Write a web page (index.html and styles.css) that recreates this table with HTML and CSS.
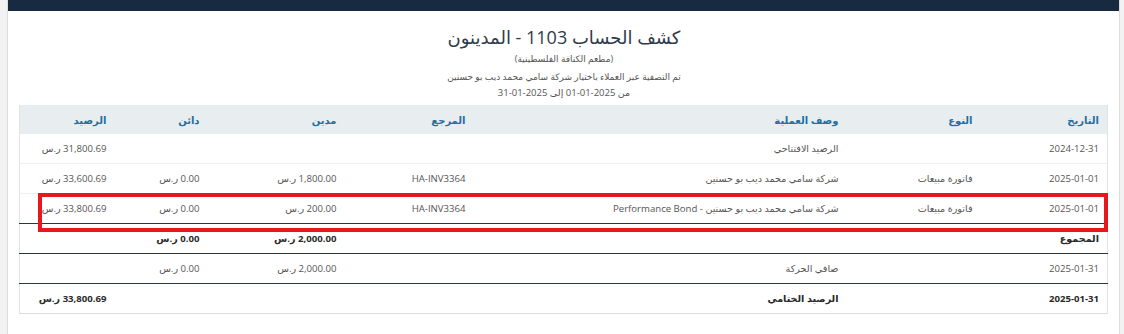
FILE: index.html
```html
<!DOCTYPE html>
<html lang="ar" dir="rtl">
<head>
<meta charset="utf-8">
<title>كشف الحساب</title>
<link rel="stylesheet" href="styles.css">
</head>
<body>
<div class="card">
  <div class="topbar"></div>
  <div class="content">
    <header class="report-head">
      <h1 class="title">كشف الحساب 1103 - المدينون</h1>
      <p class="sub company">(مطعم الكنافة الفلسطينية)</p>
      <p class="sub filter">تم التصفية عبر العملاء باختيار شركة سامي محمد ديب بو حسنين</p>
      <p class="sub period">من 2025-01-01 إلى 2025-01-31</p>
    </header>
    <div class="table-wrap">
      <table class="ledger">
        <colgroup>
          <col class="c-date"><col class="c-type"><col class="c-desc"><col class="c-ref"><col class="c-debit"><col class="c-credit"><col class="c-bal">
        </colgroup>
        <thead>
          <tr><th>التاريخ</th><th>النوع</th><th>وصف العملية</th><th>المرجع</th><th>مدين</th><th>دائن</th><th>الرصيد</th></tr>
        </thead>
        <tbody>
          <tr class="light"><td>2024-12-31</td><td></td><td>الرصيد الافتتاحي</td><td></td><td></td><td></td><td>31,800.69 ر.س</td></tr>
          <tr class="light"><td>2025-01-01</td><td>فاتورة مبيعات</td><td>شركة سامي محمد ديب بو حسنين</td><td>HA-INV3364</td><td>1,800.00 ر.س</td><td>0.00 ر.س</td><td>33,600.69 ر.س</td></tr>
          <tr class="dark"><td>2025-01-01</td><td>فاتورة مبيعات</td><td>شركة سامي محمد ديب بو حسنين - Performance Bond</td><td>HA-INV3364</td><td>200.00 ر.س</td><td>0.00 ر.س</td><td>33,800.69 ر.س</td></tr>
          <tr class="dark bold"><td>المجموع</td><td></td><td></td><td></td><td>2,000.00 ر.س</td><td>0.00 ر.س</td><td></td></tr>
          <tr class="dark"><td>2025-01-31</td><td></td><td>صافي الحركة</td><td></td><td>2,000.00 ر.س</td><td>0.00 ر.س</td><td></td></tr>
          <tr class="end bold"><td>2025-01-31</td><td></td><td>الرصيد الختامي</td><td></td><td></td><td></td><td>33,800.69 ر.س</td></tr>
        </tbody>
      </table>
      <div class="highlight"></div>
    </div>
  </div>
</div>
</body>
</html>
```
FILE: styles.css
```css
html, body {
  margin: 0;
  padding: 0;
}
body {
  background: #f2f2f2;
  font-family: "Open Sans", "Noto Sans", "DejaVu Sans", sans-serif;
  color: #555;
  height: 334px;
  overflow: hidden;
}
.card {
  margin-right: 4px;
  margin-left: 7px;
  height: 334px;
  background: #fff;
  border-left: 1px solid #dcdcdc;
  border-right: 1px solid #dcdcdc;
}
.topbar {
  height: 11px;
  background: #172a40;
}
.content {
  padding: 0 11px 0 12px;
}
.report-head {
  text-align: center;
  padding-top: 13px;
  height: 81px;
}
.title {
  margin: 0;
  font-size: 18px;
  line-height: 26px;
  font-weight: 400;
  color: #2f3a4a;
}
.sub {
  margin: 0;
  font-size: 9px;
  color: #555;
}
.company { line-height: 16px; margin-top: 1px; }
.filter { line-height: 16px; margin-top: 2px; }
.period { line-height: 14px; margin-top: 1px; font-size: 9.5px; }
.table-wrap {
  position: relative;
}
.ledger {
  width: 1088px;
  border-collapse: collapse;
  table-layout: fixed;
  font-size: 9.6px;
  border-left: 1px solid #e3e3e3;
  border-right: 1px solid #e3e3e3;
}
.c-date { width: 127px; }
.c-type { width: 134px; }
.c-desc { width: 373px; }
.c-ref { width: 129px; }
.c-debit { width: 137px; }
.c-credit { width: 93px; }
.c-bal { width: 95px; }
.ledger th {
  height: 29px;
  padding: 0 8px;
  background: #e8eef0;
  color: #1f6fa3;
  font-weight: 700;
  font-size: 10px;
  text-align: right;
}
.ledger td {
  height: 29px;
  padding: 0 8px;
  text-align: right;
  white-space: nowrap;
}
.ledger tr.light td { border-bottom: 1px solid #eeeeee; }
.ledger tr.dark td { border-bottom: 1px solid #2f3540; }
.ledger tr.end td { border-bottom: 1px solid #dddddd; }
.ledger tr.bold td {
  font-weight: 700;
  color: #2a2a2a;
}
.highlight {
  position: absolute;
  left: 18px;
  top: 88px;
  width: 1062px;
  height: 31px;
  border: 4px solid #e8171d;
  pointer-events: none;
}
```
